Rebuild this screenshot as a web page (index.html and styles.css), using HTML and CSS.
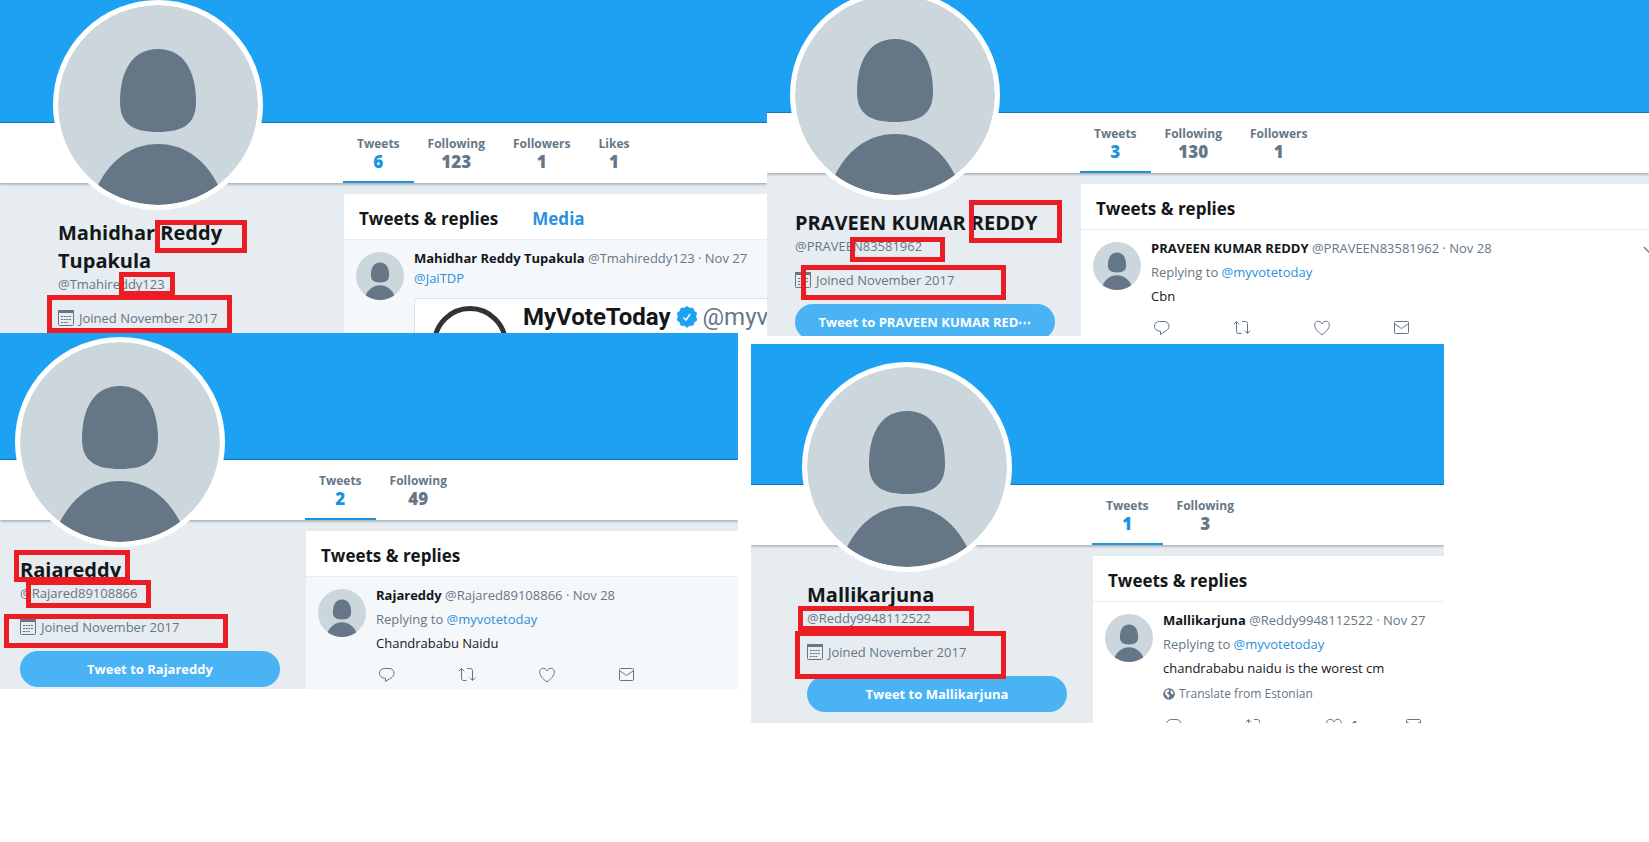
FILE: index.html
```html
<!DOCTYPE html>
<html lang="en">
<head>
<meta charset="utf-8">
<title>Profiles</title>
<link rel="stylesheet" href="styles.css">
</head>
<body>
<svg class="sprite" aria-hidden="true">
  <symbol id="person" viewBox="0 0 200 200">
    <circle cx="100" cy="100" r="100" fill="#ccd6dd"/>
    <path d="M100 44C125 44 138 65 138 97C138 119 125 127 100 127C75 127 62 119 62 97C62 65 75 44 100 44Z" fill="#657786"/>
    <path d="M40 180C51 158 71 139 100 139C129 139 149 158 160 180A100 100 0 0 1 40 180Z" fill="#657786"/>
  </symbol>
  <symbol id="calendar" viewBox="0 0 16 16">
    <rect x=".5" y=".5" width="15" height="15" rx="1" fill="none" stroke="#657786"/>
    <path d="M0 0H16V3H0Z" fill="#657786"/>
    <path d="M3 6.500H13M3 9.500H13M3 12.500H10" stroke="#657786" stroke-dasharray="2 .7" fill="none"/>
  </symbol>
  <symbol id="reply" viewBox="0 0 18 16">
    <path d="M6.500 1.500H11C14 1.500 16 3.400 16 6.200C16 8.500 14.500 10 12.500 11.200L7.500 14.500V11.200C3.500 11.200 1.500 9 1.500 6.200C1.500 3.400 3.500 1.500 6.500 1.500Z" fill="none" stroke="#657786" stroke-linejoin="round"/>
  </symbol>
  <symbol id="retweet" viewBox="0 0 18 16">
    <path d="M.8 4.300L3.500 1.500L6.200 4.300M3.500 2V11.500Q3.500 13.500 5.500 13.500H8.500M9 1.500H12.500Q14.500 1.500 14.500 3.500V13M11.800 10.700L14.500 13.500L17.200 10.700" fill="none" stroke="#657786"/>
  </symbol>
  <symbol id="like" viewBox="0 0 18 16">
    <path d="M9 14.800C5 12 1.700 8.800 1.700 5C1.700 .5 7.300 0 9 4C10.700 0 16.300 .5 16.300 5C16.300 8.800 13 12 9 14.800Z" fill="none" stroke="#657786"/>
  </symbol>
  <symbol id="mail" viewBox="0 0 18 16">
    <rect x="1.500" y="1.500" width="14" height="12" rx="1" fill="none" stroke="#657786"/>
    <path d="M2 4L8.500 8.500L15 4" fill="none" stroke="#657786"/>
  </symbol>
  <symbol id="globe" viewBox="0 0 12 12">
    <circle cx="6" cy="6" r="5.800" fill="#657786"/>
    <path d="M2 3.500L4.500 1.500L6.500 2L5.500 4L4 4.500L4.500 6L6 6.500L6.500 8L5 10.500L4 8L2.500 6.500ZM8 2L10.500 4.500L9.500 6.500L8 5.500L7.500 4Z" fill="#fff"/>
  </symbol>
  <symbol id="verified" viewBox="0 0 22 22">
    <path d="M11 .8L13.500 2.500L16.700 2.400L17.700 5.400L20.300 7.300L19.300 10.500L20.500 13.800L17.800 15.800L16.800 19L13.500 19L11 21L8.500 19L5.200 19L4.200 15.800L1.500 13.800L2.700 10.500L1.700 7.300L4.300 5.400L5.300 2.400L8.500 2.500Z" fill="#1da1f2" stroke="#1da1f2" stroke-width="1.500" stroke-linejoin="round"/>
    <path d="M7.500 11.500L10 14L14.200 8" fill="none" stroke="#fff" stroke-width="1.500"/>
  </symbol>
  <symbol id="caret" viewBox="0 0 16 10">
    <path d="M1 1L8 8L15 1" fill="none" stroke="#657786" stroke-width="1.500"/>
  </symbol>
</svg>

<main class="collage">
  <div class="column column-left">
    <section class="panel panel-mahidhar">
      <div class="banner"></div>
      <nav class="stats">
        <a class="stat active" href="#">Tweets<b>6</b></a>
        <a class="stat" href="#">Following<b>123</b></a>
        <a class="stat" href="#">Followers<b>1</b></a>
        <a class="stat" href="#">Likes<b>1</b></a>
      </nav>
      <svg class="portrait" role="img" aria-label="Profile picture"><use href="#person"/></svg>
      <div class="body">
        <aside class="bio">
          <h1>Mahidhar Reddy Tupakula</h1>
          <p class="handle">@Tmahireddy123</p>
          <p class="joined"><svg><use href="#calendar"/></svg>Joined November 2017</p>
        </aside>
        <div class="timeline tinted">
          <header class="heading"><h2>Tweets &amp; replies</h2><a href="#">Media</a></header>
          <article class="tweet">
            <svg class="thumb"><use href="#person"/></svg>
            <div class="content">
              <p class="byline"><b>Mahidhar Reddy Tupakula</b> @Tmahireddy123 · Nov 27</p>
              <p class="mention"><a href="#">@JaiTDP</a></p>
              <div class="media">
                <span class="ring"></span>
                <p class="media-name"><b>MyVoteToday</b><svg><use href="#verified"/></svg><span>@myvotetoday</span></p>
              </div>
            </div>
          </article>
        </div>
      </div>
      <span class="mark m1-name"></span>
      <span class="mark m1-handle"></span>
      <span class="mark m1-joined"></span>
    </section>

    <section class="panel panel-raja">
      <div class="banner"></div>
      <nav class="stats">
        <a class="stat active" href="#">Tweets<b>2</b></a>
        <a class="stat" href="#">Following<b>49</b></a>
      </nav>
      <svg class="portrait" role="img" aria-label="Profile picture"><use href="#person"/></svg>
      <div class="body">
        <aside class="bio">
          <h1>Rajareddy</h1>
          <p class="handle">@Rajared89108866</p>
          <p class="joined"><svg><use href="#calendar"/></svg>Joined November 2017</p>
          <button class="compose" type="button">Tweet to Rajareddy</button>
        </aside>
        <div class="timeline tinted">
          <header class="heading"><h2>Tweets &amp; replies</h2></header>
          <article class="tweet">
            <svg class="thumb"><use href="#person"/></svg>
            <div class="content">
              <p class="byline"><b>Rajareddy</b> @Rajared89108866 · Nov 28</p>
              <p class="replying">Replying to <a href="#">@myvotetoday</a></p>
              <p class="text">Chandrababu Naidu</p>
              <div class="actions">
                <button type="button" aria-label="Reply"><svg><use href="#reply"/></svg></button>
                <button type="button" aria-label="Retweet"><svg><use href="#retweet"/></svg></button>
                <button type="button" aria-label="Like"><svg><use href="#like"/></svg></button>
                <button type="button" aria-label="Message"><svg><use href="#mail"/></svg></button>
              </div>
            </div>
          </article>
        </div>
      </div>
      <span class="mark m3-name"></span>
      <span class="mark m3-handle"></span>
      <span class="mark m3-joined"></span>
    </section>
  </div>

  <div class="column column-right">
    <section class="panel panel-praveen">
      <div class="banner"></div>
      <nav class="stats">
        <a class="stat active" href="#">Tweets<b>3</b></a>
        <a class="stat" href="#">Following<b>130</b></a>
        <a class="stat" href="#">Followers<b>1</b></a>
      </nav>
      <svg class="portrait" role="img" aria-label="Profile picture"><use href="#person"/></svg>
      <div class="body">
        <aside class="bio">
          <h1>PRAVEEN KUMAR REDDY</h1>
          <p class="handle">@PRAVEEN83581962</p>
          <p class="joined"><svg><use href="#calendar"/></svg>Joined November 2017</p>
          <button class="compose" type="button">Tweet to PRAVEEN KUMAR RED⋯</button>
        </aside>
        <div class="timeline">
          <header class="heading"><h2>Tweets &amp; replies</h2></header>
          <article class="tweet">
            <svg class="thumb"><use href="#person"/></svg>
            <div class="content">
              <p class="byline"><b>PRAVEEN KUMAR REDDY</b> @PRAVEEN83581962 · Nov 28</p>
              <p class="replying">Replying to <a href="#">@myvotetoday</a></p>
              <p class="text">Cbn</p>
              <div class="actions">
                <button type="button" aria-label="Reply"><svg><use href="#reply"/></svg></button>
                <button type="button" aria-label="Retweet"><svg><use href="#retweet"/></svg></button>
                <button type="button" aria-label="Like"><svg><use href="#like"/></svg></button>
                <button type="button" aria-label="Message"><svg><use href="#mail"/></svg></button>
              </div>
            </div>
            <button class="more" type="button" aria-label="More"><svg><use href="#caret"/></svg></button>
          </article>
        </div>
      </div>
      <span class="mark m2-name"></span>
      <span class="mark m2-handle"></span>
      <span class="mark m2-joined"></span>
    </section>

    <section class="panel panel-malli">
      <div class="banner"></div>
      <nav class="stats">
        <a class="stat active" href="#">Tweets<b>1</b></a>
        <a class="stat" href="#">Following<b>3</b></a>
      </nav>
      <svg class="portrait" role="img" aria-label="Profile picture"><use href="#person"/></svg>
      <div class="body">
        <aside class="bio">
          <h1>Mallikarjuna</h1>
          <p class="handle">@Reddy9948112522</p>
          <p class="joined"><svg><use href="#calendar"/></svg>Joined November 2017</p>
          <button class="compose" type="button">Tweet to Mallikarjuna</button>
        </aside>
        <div class="timeline">
          <header class="heading"><h2>Tweets &amp; replies</h2></header>
          <article class="tweet">
            <svg class="thumb"><use href="#person"/></svg>
            <div class="content">
              <p class="byline"><b>Mallikarjuna</b> @Reddy9948112522 · Nov 27</p>
              <p class="replying">Replying to <a href="#">@myvotetoday</a></p>
              <p class="text">chandrababu naidu is the worest cm</p>
              <button class="translate" type="button"><svg><use href="#globe"/></svg>Translate from Estonian</button>
              <div class="actions">
                <button type="button" aria-label="Reply"><svg><use href="#reply"/></svg></button>
                <button type="button" aria-label="Retweet"><svg><use href="#retweet"/></svg></button>
                <button type="button" aria-label="Like"><svg><use href="#like"/></svg>1</button>
                <button type="button" aria-label="Message"><svg><use href="#mail"/></svg></button>
              </div>
            </div>
          </article>
        </div>
      </div>
      <span class="mark m4-handle"></span>
      <span class="mark m4-joined"></span>
    </section>
  </div>
</main>
</body>
</html>
```
FILE: styles.css
```css
* { box-sizing: border-box; }

body {
  margin: 0;
  background: #fff;
  color: #14171a;
  font: 13px/20px "Open Sans", "Noto Sans", sans-serif;
  overflow-x: hidden;
}

h1, h2, p { margin: 0; }
a { color: #2b90dd; text-decoration: none; }
button { border: 0; padding: 0; background: none; color: #657786; font: inherit; cursor: pointer; }
svg { display: block; flex: none; }
.sprite { position: absolute; width: 0; height: 0; }

/* Canvas of overlapping profile captures */
.collage { display: grid; grid-template-columns: 767fr 882fr; }
.column { min-width: 0; }

.panel {
  position: relative;
  display: flex;
  flex-direction: column;
  overflow: hidden;
  background: #e6ecf0;
}
.panel-mahidhar { --inset: 58px; --banner: 123px; height: 333px; }
.panel-raja { --inset: 20px; --banner: 127px; height: 356px; margin-right: 29px; }
.panel-praveen { --inset: 28px; --banner: 113px; height: 336px; }
.panel-malli { --inset: 56px; --banner: 141px; height: 379px; width: 693px; margin: 8px 0 0 -16px; }

.banner {
  flex: none;
  height: var(--banner);
  background: #1da1f2;
  border-bottom: 1px solid #1a7fc0;
}

/* Profile statistics */
.stats {
  flex: none;
  display: flex;
  height: 60px;
  padding-left: calc(var(--inset) + 285px);
  background: #fff;
  box-shadow: 0 1px 3px rgba(0, 0, 0, .35);
  z-index: 1;
}
.stat {
  display: flex;
  flex-direction: column;
  align-items: center;
  padding: 13px 14px 0;
  color: #657786;
  font-size: 12px;
  line-height: 16px;
  font-weight: 700;
}
.stat b { font-size: 17px; line-height: 20px; }
.stat.active { border-bottom: 2px solid #1b95e0; }
.stat.active b { color: #1b95e0; }

.portrait {
  position: absolute;
  z-index: 2;
  left: calc(var(--inset) - 5px);
  top: calc(var(--banner) - 123px);
  width: 210px;
  height: 210px;
  border: 5px solid #fff;
  border-radius: 50%;
  background: #fff;
}

/* Two-column body */
.body {
  flex: 1;
  display: grid;
  grid-template-columns: 260px minmax(0, 1fr);
  gap: 26px;
  padding: 11px 0 0 var(--inset);
}
.bio { padding-top: 25px; color: #657786; }
.bio h1 { color: #14171a; font-size: 20px; line-height: 28px; font-weight: 700; }
.handle { line-height: 18px; }
.joined { display: flex; align-items: center; gap: 5px; margin-top: 15px; }
.joined svg { width: 16px; height: 16px; }
.compose {
  width: 100%;
  height: 36px;
  margin-top: 14px;
  border-radius: 18px;
  background: #4ab3f4;
  color: #fff;
  font-weight: 700;
  white-space: nowrap;
}

/* Timeline */
.timeline { background: #fff; }
.tinted .tweet { background: #f5f8fa; }
.heading {
  display: flex;
  align-items: center;
  gap: 34px;
  height: 46px;
  padding: 5px 15px 0;
  border-bottom: 1px solid #e6ecf0;
  font-size: 17px;
  line-height: 24px;
  font-weight: 700;
}
.heading h2 { font-size: 17px; }
.tweet { display: flex; gap: 10px; height: 100%; padding: 8px 0 0 12px; }
.thumb { width: 48px; height: 48px; margin-top: 4px; }
.content { flex: 1; min-width: 0; white-space: nowrap; }
.byline, .replying { color: #657786; }
.byline b { color: #14171a; }
.replying, .text { margin-top: 4px; }
.more { align-self: flex-start; margin: 8px -8px 0 0; }
.more svg { width: 14px; height: 9px; }

.actions { display: flex; margin-top: 12px; }
.actions button { display: flex; flex: none; align-items: center; gap: 8px; width: 80px; height: 20px; padding-left: 2px; font-size: 12px; font-weight: 700; }
.actions svg { width: 18px; height: 16px; }
.translate { display: flex; align-items: center; gap: 4px; margin-top: 6px; font-size: 12px; line-height: 20px; }
.translate svg { width: 12px; height: 12px; }

/* Embedded picture */
.media {
  display: flex;
  gap: 15px;
  height: 200px;
  margin-top: 10px;
  padding: 7px 0 0 17px;
  border: 1px solid #dbe2e7;
  border-right: 0;
  border-radius: 4px 0 0 0;
  background: #fff;
}
.ring { flex: none; width: 76px; height: 76px; border: 5px solid #333; border-radius: 50%; }
.media-name { display: flex; gap: 5px; height: 24px; color: #657786; font: 24px/22px Roboto, sans-serif; }
.media-name b { color: #14171a; }
.media-name svg { width: 22px; height: 22px; }

/* Red call-outs drawn over the captures */
.mark { position: absolute; z-index: 3; border: 5px solid #ec1c24; }
.m1-name { left: 155px; top: 220px; width: 92px; height: 33px; }
.m1-handle { left: 119px; top: 272px; width: 56px; height: 24px; }
.m1-joined { left: 47px; top: 295px; width: 185px; height: 38px; }
.m2-name { left: 202px; top: 200px; width: 93px; height: 43px; }
.m2-handle { left: 83px; top: 237px; width: 95px; height: 25px; }
.m2-joined { left: 34px; top: 265px; width: 205px; height: 35px; }
.m3-name { left: 14px; top: 217px; width: 116px; height: 32px; }
.m3-handle { left: 26px; top: 247px; width: 125px; height: 28px; }
.m3-joined { left: 4px; top: 281px; width: 224px; height: 34px; }
.m4-handle { left: 47px; top: 262px; width: 176px; height: 25px; }
.m4-joined { left: 44px; top: 287px; width: 211px; height: 48px; }
```
